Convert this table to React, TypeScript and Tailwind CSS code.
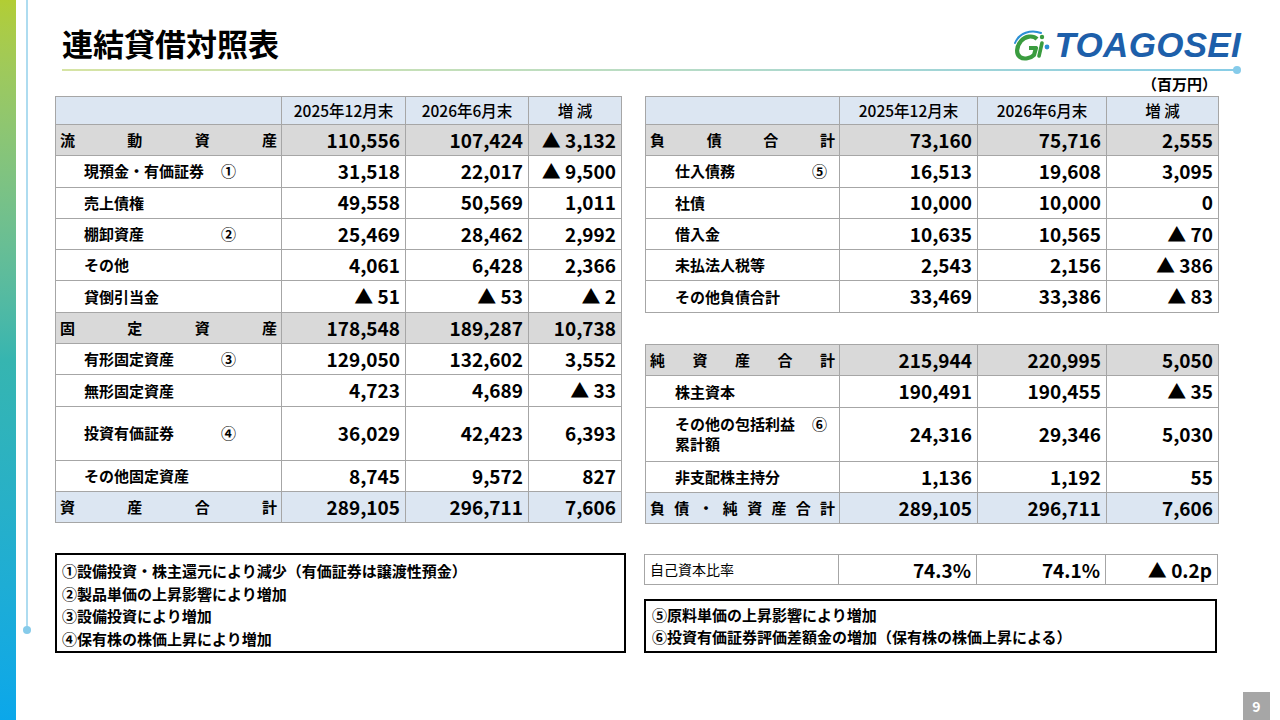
import React from "react";

type Row = {
  kind: "cat" | "sub";
  label: string;
  label2?: string;
  mark?: string;
  vals: string[];
  bg?: "gray" | "blue";
  tall?: boolean;
};

const assets: Row[] = [
  { kind: "cat", label: "流動資産", vals: ["110,556", "107,424", "▲ 3,132"], bg: "gray" },
  { kind: "sub", label: "現預金・有価証券", mark: "①", vals: ["31,518", "22,017", "▲ 9,500"] },
  { kind: "sub", label: "売上債権", vals: ["49,558", "50,569", "1,011"] },
  { kind: "sub", label: "棚卸資産", mark: "②", vals: ["25,469", "28,462", "2,992"] },
  { kind: "sub", label: "その他", vals: ["4,061", "6,428", "2,366"] },
  { kind: "sub", label: "貸倒引当金", vals: ["▲ 51", "▲ 53", "▲ 2"] },
  { kind: "cat", label: "固定資産", vals: ["178,548", "189,287", "10,738"], bg: "gray" },
  { kind: "sub", label: "有形固定資産", mark: "③", vals: ["129,050", "132,602", "3,552"] },
  { kind: "sub", label: "無形固定資産", vals: ["4,723", "4,689", "▲ 33"] },
  { kind: "sub", label: "投資有価証券", mark: "④", vals: ["36,029", "42,423", "6,393"], tall: true },
  { kind: "sub", label: "その他固定資産", vals: ["8,745", "9,572", "827"] },
  { kind: "cat", label: "資産合計", vals: ["289,105", "296,711", "7,606"], bg: "blue" },
];

const liabilities: Row[] = [
  { kind: "cat", label: "負債合計", vals: ["73,160", "75,716", "2,555"], bg: "gray" },
  { kind: "sub", label: "仕入債務", mark: "⑤", vals: ["16,513", "19,608", "3,095"] },
  { kind: "sub", label: "社債", vals: ["10,000", "10,000", "0"] },
  { kind: "sub", label: "借入金", vals: ["10,635", "10,565", "▲ 70"] },
  { kind: "sub", label: "未払法人税等", vals: ["2,543", "2,156", "▲ 386"] },
  { kind: "sub", label: "その他負債合計", vals: ["33,469", "33,386", "▲ 83"] },
];

const equity: Row[] = [
  { kind: "cat", label: "純資産合計", vals: ["215,944", "220,995", "5,050"], bg: "gray" },
  { kind: "sub", label: "株主資本", vals: ["190,491", "190,455", "▲ 35"] },
  { kind: "sub", label: "その他の包括利益", label2: "累計額", mark: "⑥", vals: ["24,316", "29,346", "5,030"], tall: true },
  { kind: "sub", label: "非支配株主持分", vals: ["1,136", "1,192", "55"] },
  { kind: "cat", label: "負債・純資産合計", vals: ["289,105", "296,711", "7,606"], bg: "blue" },
];

const cell = "border-[1.5px] border-[#a6a6a6] p-0";

const Colgroup = ({ widths }: { widths: number[] }) => (
  <colgroup>
    {widths.map((w, i) => (
      <col key={i} style={{ width: w }} />
    ))}
  </colgroup>
);

const Label = ({ row, indent }: { row: Row; indent: string }) => {
  if (row.kind === "cat") {
    return (
      <div className="flex justify-between px-[4px] text-[15px] font-bold">
        {Array.from(row.label).map((ch, i) => (
          <span key={i}>{ch}</span>
        ))}
      </div>
    );
  }
  return (
    <div className={`flex items-start text-[15px] font-bold ${indent}`}>
      <div className="w-[137px] shrink-0 leading-[20px]">
        <div>{row.label}</div>
        {row.label2 && <div>{row.label2}</div>}
      </div>
      {row.mark && <span className="leading-[20px]">{row.mark}</span>}
    </div>
  );
};

const Body = ({ rows, indent }: { rows: Row[]; indent: string }) => (
  <>
    {rows.map((row, i) => {
      const bg =
        row.bg === "gray" ? "bg-[#d9d9d9]" : row.bg === "blue" ? "bg-[#dce6f2]" : "bg-white";
      const h = row.tall ? "h-[54px]" : "h-[31.3px]";
      return (
        <tr key={i} className={bg}>
          <td className={`${cell} ${h}`}>
            <Label row={row} indent={indent} />
          </td>
          {row.vals.map((v, j) => (
            <td key={j} className={`${cell} ${h} pr-[5px] text-right text-[19px] font-bold`}>
              {v}
            </td>
          ))}
        </tr>
      );
    })}
  </>
);

const Head = () => (
  <tr className="bg-[#dce6f2]">
    <td className={`${cell} h-[28px]`} />
    <td className={`${cell} text-center text-[15.5px] font-medium`}>2025年12月末</td>
    <td className={`${cell} text-center text-[15.5px] font-medium`}>2026年6月末</td>
    <td className={`${cell} text-center text-[15.5px] font-medium`}>増 減</td>
  </tr>
);

// company mark: green G with a blue swoosh, plus the dotted "i"
const Logo = () => (
  <div className="mt-[27px] flex items-center">
    <svg width="44" height="34" viewBox="0 0 44 34">
      <path d="M27 11 C23 7 15 8 11 13 C6 19 6 26 10 29 C14 32 21 30 24 27 L26 20 L19 20" fill="none" stroke="#3a9c3f" strokeWidth="4.2" strokeLinejoin="round" />
      <path d="M5 15 C9 5 21 1 31 5" fill="none" stroke="#2b8fd4" strokeWidth="2" strokeLinecap="round" />
      <circle cx="32" cy="9" r="2.2" fill="#3a9c3f" />
      <path d="M32 15 L29 28" stroke="#3a9c3f" strokeWidth="3.6" strokeLinecap="round" />
      <circle cx="37" cy="19" r="2.4" fill="#2b8fd4" />
    </svg>
    <span
      className="text-[35px] font-bold italic leading-none tracking-[0.3px] text-[#1d5faa]"
      style={{ fontFamily: '"Liberation Sans", Arial, sans-serif' }}
    >
      TOAGOSEI
    </span>
  </div>
);

export default function App() {
  return (
    <div
      className="relative flex h-[720px] w-[1280px] overflow-hidden bg-white text-black"
      style={{ fontFamily: '"Noto Sans CJK JP", "Noto Sans", sans-serif' }}
    >
      {/* side bar */}
      <div className="h-full w-[16px] shrink-0 bg-linear-to-b from-[#b2cd33] via-[#36b5b0] to-[#0ba7ea]" />
      <div className="flex w-[21px] shrink-0 flex-col items-center">
        <div className="h-[627px] w-[2px] bg-[#aedcf0]" />
        <div className="-mt-[1px] h-[8px] w-[8px] rounded-full bg-[#86cbea]" />
      </div>

      <div className="ml-[18px] flex w-[1186px] flex-col">
        {/* header */}
        <div className="flex items-start justify-between">
          <h1 className="ml-[7px] pt-[24px] text-[31px] font-bold leading-[38px]">連結貸借対照表</h1>
          <Logo />
        </div>
        <div className="ml-[7px] mt-[4px] flex items-center">
          <div className="h-[2px] flex-1 bg-linear-to-r from-[#d6e4a4] via-[#b9dcc4] to-[#88cde6]" />
          <div className="-ml-[1px] h-[8px] w-[8px] rounded-full bg-[#86cbea]" />
        </div>
        <div className="flex h-[22px] justify-end pr-[24px] text-[15px] font-bold leading-[20px]">
          （百万円）
        </div>

        {/* tables */}
        <div className="flex items-start gap-[23px]">
          <table className="table-fixed border-collapse">
            <Colgroup widths={[226, 124, 123, 93]} />
            <tbody>
              <Head />
              <Body rows={assets} indent="pl-[28px]" />
            </tbody>
          </table>

          <div className="flex flex-col">
            <table className="table-fixed border-collapse">
              <Colgroup widths={[194, 138, 129, 112]} />
              <tbody>
                <Head />
                <Body rows={liabilities} indent="pl-[29px]" />
              </tbody>
            </table>
            <div className="h-[31.3px]" />
            <table className="table-fixed border-collapse">
              <Colgroup widths={[194, 138, 129, 112]} />
              <tbody>
                <Body rows={equity} indent="pl-[29px]" />
              </tbody>
            </table>
          </div>
        </div>

        {/* notes */}
        <div className="mt-[29px] flex items-start gap-[18px]">
          <div className="h-[100px] w-[571px] border-2 border-black pl-[5px] pt-[5px] text-[15px] font-bold leading-[22.5px]">
            <div>①設備投資・株主還元により減少（有価証券は譲渡性預金）</div>
            <div>②製品単価の上昇影響により増加</div>
            <div>③設備投資により増加</div>
            <div>④保有株の株価上昇により増加</div>
          </div>

          <div className="mt-[1px] flex flex-col">
            <table className="table-fixed border-collapse">
              <Colgroup widths={[194, 138, 129, 112]} />
              <tbody>
                <tr>
                  <td className={`${cell} h-[30px] pl-[5px] text-[14px]`}>自己資本比率</td>
                  <td className={`${cell} pr-[5px] text-right text-[19px] font-bold`}>74.3%</td>
                  <td className={`${cell} pr-[5px] text-right text-[19px] font-bold`}>74.1%</td>
                  <td className={`${cell} pr-[5px] text-right text-[19px] font-bold`}>▲ 0.2p</td>
                </tr>
              </tbody>
            </table>
            <div className="mt-[14px] h-[54px] w-[573px] border-2 border-black pl-[6px] pt-[3px] text-[15px] font-bold leading-[22px]">
              <div>⑤原料単価の上昇影響により増加</div>
              <div>⑥投資有価証券評価差額金の増加（保有株の株価上昇による）</div>
            </div>
          </div>
        </div>

        <div className="-mr-[29px] mt-auto flex justify-end">
          <div className="flex h-[28px] w-[27px] items-center justify-center bg-[#a6a6a6] text-[14px] font-bold text-white">
            9
          </div>
        </div>
      </div>
    </div>
  );
}
